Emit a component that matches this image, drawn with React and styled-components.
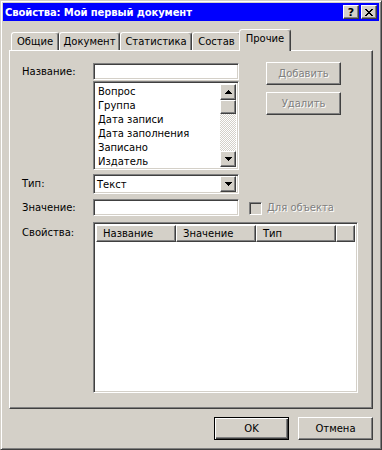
import React from "react";
import styled, { createGlobalStyle } from "styled-components";

const GlobalStyle = createGlobalStyle`
  html, body { margin: 0; padding: 0; background: #d4d0c8; }
  * { box-sizing: border-box; }
  body {
    font-family: "DejaVu Sans", Tahoma, sans-serif;
    font-size: 10px;
    color: #000;
  }
`;

const raised = `
  border: 1px solid;
  border-color: #fff #404040 #404040 #fff;
  box-shadow: inset -1px -1px #808080, inset 1px 1px #d4d0c8;
  background: #d4d0c8;
`;

const sunken = `
  border: 1px solid;
  border-color: #808080 #fff #fff #808080;
  box-shadow: inset 1px 1px #404040, inset -1px -1px #d4d0c8;
`;

const Window = styled.div`
  width: 382px;
  height: 450px;
  background: #d4d0c8;
  border: 1px solid;
  border-color: #d4d0c8 #404040 #404040 #d4d0c8;
  box-shadow: inset 1px 1px #fff, inset -1px -1px #808080;
  padding: 2px;
  display: flex;
  flex-direction: column;
`;

const TitleBar = styled.div`
  height: 18px;
  background: #0000ff;
  display: flex;
  align-items: center;
  padding: 0 2px;
  color: #fff;
  font-weight: bold;
  font-size: 10px;
`;

const TitleText = styled.div`
  flex: 1;
  white-space: nowrap;
  letter-spacing: -0.1px;
`;

const CapButton = styled.div`
  ${raised}
  width: 16px;
  height: 14px;
  margin-left: ${(p) => p.$gap}px;
  display: flex;
  align-items: center;
  justify-content: center;
  color: #000;
  font-size: 11px;
  font-weight: bold;
`;

const Body = styled.div`
  padding: 8px 6px 0;
  display: flex;
  flex-direction: column;
`;

const TabStrip = styled.div`
  display: flex;
  align-items: flex-end;
  height: 21px;
  padding-left: 2px;
`;

const Tab = styled.div`
  position: relative;
  z-index: ${(p) => (p.$active ? 2 : 0)};
  width: ${(p) => p.$w}px;
  height: ${(p) => (p.$active ? 22 : 18)}px;
  margin-left: ${(p) => (p.$active ? -2 : 0)}px;
  margin-bottom: ${(p) => (p.$active ? -1 : 0)}px;
  padding-bottom: ${(p) => (p.$active ? 4 : 0)}px;
  background: #d4d0c8;
  border: 1px solid;
  border-bottom: none;
  border-color: #fff #404040 transparent #fff;
  border-radius: 3px 3px 0 0;
  box-shadow: inset -1px 0 #808080;
  display: flex;
  align-items: center;
  justify-content: center;
  white-space: nowrap;
`;

const Panel = styled.div`
  position: relative;
  z-index: 1;
  height: 359px;
  border: 1px solid;
  border-color: #fff #404040 #404040 #fff;
  box-shadow: inset -1px -1px #808080;
  padding: 12px 12px 0;
  display: flex;
  flex-direction: column;
`;

const Row = styled.div`
  display: flex;
  align-items: flex-start;
  margin-top: ${(p) => p.$mt || 0}px;
`;

const Label = styled.div`
  width: 71px;
  flex: none;
  line-height: ${(p) => p.$h || 17}px;
  padding-top: ${(p) => p.$pt || 0}px;
  white-space: nowrap;
`;

const FieldColumn = styled.div`
  width: 146px;
  display: flex;
  flex-direction: column;
`;

const Edit = styled.div`
  ${sunken}
  width: 146px;
  height: 17px;
  background: #fff;
`;

const ListBox = styled.div`
  ${sunken}
  margin-top: 1px;
  height: 89px;
  background: #fff;
  padding: 2px;
  display: flex;
`;

const Items = styled.div`
  flex: 1;
  padding-top: 1px;
`;

const Item = styled.div`
  height: 14px;
  line-height: 14px;
  padding-left: 2px;
  white-space: nowrap;
`;

const ScrollBar = styled.div`
  width: 16px;
  display: flex;
  flex-direction: column;
`;

const ScrollBtn = styled.div`
  ${raised}
  width: 16px;
  height: ${(p) => p.$h || 16}px;
  flex: none;
  display: flex;
  align-items: center;
  justify-content: center;
`;

const Track = styled.div`
  flex: 1;
  background-color: #fff;
  background-image: repeating-conic-gradient(#d4d0c8 0 25%, #fff 0 50%);
  background-size: 2px 2px;
`;

const SideButtons = styled.div`
  margin-left: 27px;
  margin-top: -1px;
  display: flex;
  flex-direction: column;
  gap: 7px;
`;

const PushButton = styled.div`
  ${raised}
  width: 75px;
  height: 23px;
  display: flex;
  align-items: center;
  justify-content: center;
  color: ${(p) => (p.$disabled ? "#808080" : "#000")};
  text-shadow: ${(p) => (p.$disabled ? "1px 1px #fff" : "none")};
  ${(p) =>
    p.$default &&
    `
    border: 1px solid #000;
    box-shadow: inset 1px 1px #fff, inset -1px -1px #404040, inset -2px -2px #808080;
  `}
`;

const Combo = styled.div`
  ${sunken}
  width: 146px;
  height: 20px;
  background: #fff;
  padding: 2px;
  display: flex;
  align-items: center;
`;

const ComboText = styled.div`
  flex: 1;
  padding-left: 1px;
`;

const Check = styled.div`
  ${sunken}
  width: 13px;
  height: 13px;
  margin: 3px 5px 0 10px;
  background: #d4d0c8;
`;

const DisabledText = styled.div`
  color: #808080;
  text-shadow: 1px 1px #fff;
  line-height: 17px;
`;

const ListView = styled.div`
  ${sunken}
  width: 265px;
  height: 171px;
  background: #fff;
  padding: 2px;
`;

const Header = styled.div`
  display: flex;
  height: 17px;
`;

const HeaderCell = styled.div`
  ${raised}
  box-shadow: inset -1px -1px #808080;
  width: ${(p) => (p.$w ? `${p.$w}px` : "auto")};
  flex: ${(p) => (p.$w ? "none" : "1")};
  line-height: 15px;
  padding-left: 6px;
  white-space: nowrap;
`;

const Footer = styled.div`
  display: flex;
  justify-content: flex-end;
  gap: 9px;
  margin-top: 8px;
`;

const Arrow = ({ dir }) => (
  <svg width="7" height="4" viewBox="0 0 7 4">
    <path
      d={
        dir === "up"
          ? "M3 0h1v1h1v1h1v1h1v1H0V3h1V2h1V1h1z"
          : "M0 0h7v1H6v1H5v1H4v1H3V3H2V2H1V1H0z"
      }
      fill="#000"
    />
  </svg>
);

const CloseGlyph = () => (
  <svg width="8" height="7" viewBox="0 0 8 7">
    <path
      d="M0 0h2v1h1v1h2V1h1V0h2v1H7v1H6v1H5v1h1v1h1v1h1v1H6V6H5V5H3v1H2v1H0V6h1V5h1V4h1V3H2V2H1V1H0z"
      fill="#000"
    />
  </svg>
);

const tabs = [
  ["Общие", 48],
  ["Документ", 61],
  ["Статистика", 72],
  ["Состав", 49],
  ["Прочие", 52, true],
];

const items = [
  "Вопрос",
  "Группа",
  "Дата записи",
  "Дата заполнения",
  "Записано",
  "Издатель",
];

export default function App() {
  return (
    <>
      <GlobalStyle />
      <Window>
        <TitleBar>
          <TitleText>Свойства: Мой первый документ</TitleText>
          <CapButton $gap={0}>?</CapButton>
          <CapButton $gap={2}>
            <CloseGlyph />
          </CapButton>
        </TitleBar>
        <Body>
          <TabStrip>
            {tabs.map(([t, w, a]) => (
              <Tab key={t} $w={w} $active={a}>
                {t}
              </Tab>
            ))}
          </TabStrip>
          <Panel>
            <Row>
              <Label>Название:</Label>
              <FieldColumn>
                <Edit />
                <ListBox>
                  <Items>
                    {items.map((i) => (
                      <Item key={i}>{i}</Item>
                    ))}
                  </Items>
                  <ScrollBar>
                    <ScrollBtn>
                      <Arrow dir="up" />
                    </ScrollBtn>
                    <ScrollBtn $h={14} />
                    <Track />
                    <ScrollBtn>
                      <Arrow dir="down" />
                    </ScrollBtn>
                  </ScrollBar>
                </ListBox>
              </FieldColumn>
              <SideButtons>
                <PushButton $disabled>Добавить</PushButton>
                <PushButton $disabled>Удалить</PushButton>
              </SideButtons>
            </Row>
            <Row $mt={4}>
              <Label $h={20}>Тип:</Label>
              <Combo>
                <ComboText>Текст</ComboText>
                <ScrollBtn>
                  <Arrow dir="down" />
                </ScrollBtn>
              </Combo>
            </Row>
            <Row $mt={5}>
              <Label>Значение:</Label>
              <Edit />
              <Check />
              <DisabledText>Для объекта</DisabledText>
            </Row>
            <Row $mt={6}>
              <Label $pt={2}>Свойства:</Label>
              <ListView>
                <Header>
                  <HeaderCell $w={80}>Название</HeaderCell>
                  <HeaderCell $w={80}>Значение</HeaderCell>
                  <HeaderCell $w={80}>Тип</HeaderCell>
                  <HeaderCell />
                </Header>
              </ListView>
            </Row>
          </Panel>
          <Footer>
            <PushButton $default>OK</PushButton>
            <PushButton>Отмена</PushButton>
          </Footer>
        </Body>
      </Window>
    </>
  );
}
